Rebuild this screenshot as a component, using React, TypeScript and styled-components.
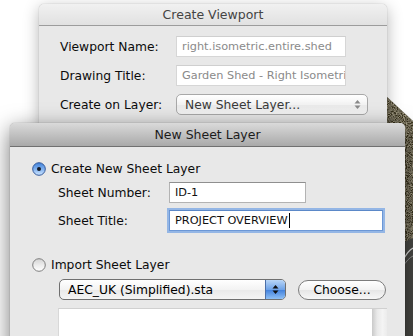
import React from 'react';
import styled, { createGlobalStyle } from 'styled-components';

const GlobalStyle = createGlobalStyle`
  html, body { margin: 0; padding: 0; background: #ffffff; }
  body { font-family: "DejaVu Sans", "Liberation Sans", sans-serif; color: #111; }
`;

const Desktop = styled.div`
  position: relative;
  width: 413px;
  height: 336px;
  overflow: hidden;
  background: #ffffff;
`;

const Backdrop = styled.svg`
  position: absolute;
  left: 0;
  top: 0;
  width: 413px;
  height: 336px;
`;

const Window = styled.div<{ $x: number; $y: number; $w: number; $h: number; $front?: boolean }>`
  position: absolute;
  left: ${p => p.$x}px;
  top: ${p => p.$y}px;
  width: ${p => p.$w}px;
  height: ${p => p.$h}px;
  display: flex;
  flex-direction: column;
  background: #e8e8e8;
  border-radius: 5px 5px 0 0;
  box-shadow: ${p => (p.$front ? '0 6px 22px rgba(0,0,0,0.55), 0 0 1px rgba(0,0,0,0.5)' : '0 4px 16px rgba(0,0,0,0.3), 0 0 1px rgba(0,0,0,0.35)')};
`;

const TitleBar = styled.div<{ $active?: boolean }>`
  height: ${p => (p.$active ? 23 : 21)}px;
  flex: none;
  display: flex;
  align-items: center;
  justify-content: center;
  border-radius: 5px 5px 0 0;
  border-bottom: 1px solid ${p => (p.$active ? '#707070' : '#9c9c9c')};
  background: ${p => (p.$active ? 'linear-gradient(#dadada, #a9a9a9)' : 'linear-gradient(#f1f1f1, #e1e1e1)')};
  font-size: 12.5px;
  color: ${p => (p.$active ? '#1c1c1c' : '#444')};
`;

const Form = styled.div<{ $left: number; $labelW: number; $gap: number }>`
  display: grid;
  grid-template-columns: ${p => p.$labelW}px auto;
  row-gap: ${p => p.$gap}px;
  align-items: center;
  justify-items: start;
  padding-left: ${p => p.$left}px;
`;

const BackForm = styled(Form)`
  margin-top: 10px;
`;

const Label = styled.div`
  font-size: 12.3px;
  color: #0c0c0c;
  white-space: nowrap;
`;

const TextField = styled.div<{ $w: number; $dim?: boolean; $focus?: boolean }>`
  box-sizing: border-box;
  width: ${p => p.$w}px;
  height: 21px;
  display: flex;
  align-items: center;
  padding: 0 5px;
  background: #fff;
  border: 1px solid ${p => (p.$focus ? '#6b97d6' : p.$dim ? '#d6d6d6' : '#b3b3b3')};
  border-top-color: ${p => (p.$focus ? '#5b88c8' : p.$dim ? '#cfcfcf' : '#8f8f8f')};
  box-shadow: ${p => (p.$focus ? '0 0 0 2px rgba(120,165,228,0.75)' : 'none')};
  font-size: 11.3px;
  color: ${p => (p.$dim ? '#8a8a8a' : '#111')};
  white-space: nowrap;
  overflow: hidden;
`;

const Caret = styled.span`
  display: inline-block;
  width: 1px;
  height: 15px;
  background: #000;
  margin-left: 1px;
`;

const Popup = styled.div<{ $w: number; $active?: boolean }>`
  box-sizing: border-box;
  width: ${p => p.$w}px;
  height: 21px;
  display: flex;
  align-items: stretch;
  border: 1px solid ${p => (p.$active ? '#6f6f6f' : '#a8a8a8')};
  border-radius: 5px;
  background: linear-gradient(#ffffff, #f3f3f3 50%, #e9e9e9 51%, #f4f4f4);
  overflow: hidden;
  font-size: 12.3px;
  color: ${p => (p.$active ? '#000' : '#3a3a3a')};
`;

const PopupText = styled.div`
  flex: 1;
  display: flex;
  align-items: center;
  padding-left: 8px;
  white-space: nowrap;
`;

const PopupArrows = styled.div<{ $active?: boolean }>`
  width: 19px;
  flex: none;
  display: flex;
  align-items: center;
  justify-content: center;
  background: ${p => (p.$active ? 'linear-gradient(#b9d6f7, #6fa3e8 50%, #3f7fdc 51%, #8fc0f5)' : 'transparent')};
  border-left: ${p => (p.$active ? '1px solid #4b6fa8' : 'none')};
`;

const Body = styled.div`
  display: flex;
  flex-direction: column;
  padding-left: 22px;
`;

const RadioRow = styled.div<{ $top: number }>`
  display: flex;
  align-items: center;
  gap: 5px;
  margin-top: ${p => p.$top}px;
  font-size: 12.3px;
  color: #0c0c0c;
  height: 15px;
`;

const SubForm = styled(Form)`
  margin-top: 6px;
`;

const ImportRow = styled.div`
  display: flex;
  align-items: center;
  gap: 12px;
  margin-top: 7px;
  padding-left: 27px;
`;

const PillButton = styled.div`
  box-sizing: border-box;
  width: 88px;
  height: 20px;
  border: 1px solid #7c7c7c;
  border-radius: 10px;
  background: linear-gradient(#ffffff, #f2f2f2 50%, #e6e6e6 51%, #f7f7f7);
  display: flex;
  align-items: center;
  justify-content: center;
  font-size: 12.3px;
  color: #000;
`;

const ListBox = styled.div`
  margin-top: 8px;
  margin-left: 26px;
  width: 328px;
  height: 40px;
  display: flex;
  background: #fff;
  border-left: 1px solid #d8d8d8;
  border-top: 1px solid #d0d0d0;
`;

const ListArea = styled.div`
  flex: 1;
`;

const ScrollTrack = styled.div`
  width: 15px;
  background: linear-gradient(90deg, #c9c9c9, #e9e9e9 35%, #f4f4f4 70%, #ececec);
`;

const Radio: React.FC<{ on?: boolean }> = ({ on }) => (
  <svg width="14" height="14" viewBox="0 0 14 14">
    <defs>
      <linearGradient id="rOn" x1="0" y1="0" x2="0" y2="1">
        <stop offset="0" stopColor="#3d7fd8" />
        <stop offset="0.5" stopColor="#7fb0ee" />
        <stop offset="1" stopColor="#cfe6ff" />
      </linearGradient>
      <linearGradient id="rOff" x1="0" y1="0" x2="0" y2="1">
        <stop offset="0" stopColor="#d2d2d2" />
        <stop offset="0.5" stopColor="#ececec" />
        <stop offset="1" stopColor="#ffffff" />
      </linearGradient>
    </defs>
    <circle cx="7" cy="7" r="6.3" fill={on ? 'url(#rOn)' : 'url(#rOff)'} stroke={on ? '#34599a' : '#7d7d7d'} strokeWidth="1" />
    {on && <circle cx="7" cy="7" r="2" fill="#141a26" />}
  </svg>
);

const Arrows: React.FC<{ color: string }> = ({ color }) => (
  <svg width="7" height="11" viewBox="0 0 7 11">
    <path d="M3.5 1 L6.5 4.5 L0.5 4.5 Z" fill={color} />
    <path d="M3.5 10 L6.5 6.5 L0.5 6.5 Z" fill={color} />
  </svg>
);

export default function App() {
  return (
    <Desktop>
      <GlobalStyle />
      <Backdrop viewBox="0 0 413 336">
        <defs>
          <filter id="grain" x="0" y="0" width="100%" height="100%">
            <feTurbulence type="fractalNoise" baseFrequency="0.9" numOctaves="2" seed="4" result="n" />
            <feColorMatrix in="n" type="matrix" values="0 0 0 0 0.55  0 0 0 0 0.5  0 0 0 0 0.35  0 0 0 1.6 -0.55" result="c" />
            <feComposite in="c" in2="SourceGraphic" operator="in" result="t" />
            <feMerge>
              <feMergeNode in="SourceGraphic" />
              <feMergeNode in="t" />
            </feMerge>
          </filter>
        </defs>
        <polygon points="385,95 413,121 413,336 385,336" fill="#37321f" filter="url(#grain)" />
        <polygon points="400,244 413,238 413,336 400,336" fill="#4a4a46" />
        <path d="M402 262 Q 408 250 413 248" stroke="#e6e6e6" strokeWidth="1.2" fill="none" />
        <path d="M402 268 Q 408 258 413 256" stroke="#9a9a9a" strokeWidth="1" fill="none" />
      </Backdrop>

      <Window $x={39} $y={4} $w={348} $h={200}>
        <TitleBar>Create Viewport</TitleBar>
        <BackForm $left={21} $labelW={116} $gap={8}>
          <Label>Viewport Name:</Label>
          <TextField $w={170} $dim>right.isometric.entire.shed</TextField>
          <Label>Drawing Title:</Label>
          <TextField $w={170} $dim>Garden Shed - Right Isometric</TextField>
          <Label>Create on Layer:</Label>
          <Popup $w={192}>
            <PopupText>New Sheet Layer...</PopupText>
            <PopupArrows>
              <Arrows color="#8a8a8a" />
            </PopupArrows>
          </Popup>
        </BackForm>
      </Window>

      <Window $x={10} $y={123} $w={395} $h={240} $front>
        <TitleBar $active>New Sheet Layer</TitleBar>
        <Body>
          <RadioRow $top={14}>
            <Radio on />
            <span>Create New Sheet Layer</span>
          </RadioRow>
          <SubForm $left={26} $labelW={111} $gap={7}>
            <Label>Sheet Number:</Label>
            <TextField $w={137}>ID-1</TextField>
            <Label>Sheet Title:</Label>
            <TextField $w={214} $focus>
              PROJECT OVERVIEW<Caret />
            </TextField>
          </SubForm>
          <RadioRow $top={26}>
            <Radio />
            <span>Import Sheet Layer</span>
          </RadioRow>
          <ImportRow>
            <Popup $w={227} $active>
              <PopupText>AEC_UK (Simplified).sta</PopupText>
              <PopupArrows $active>
                <Arrows color="#101010" />
              </PopupArrows>
            </Popup>
            <PillButton>Choose...</PillButton>
          </ImportRow>
          <ListBox>
            <ListArea />
            <ScrollTrack />
          </ListBox>
        </Body>
      </Window>
    </Desktop>
  );
}
